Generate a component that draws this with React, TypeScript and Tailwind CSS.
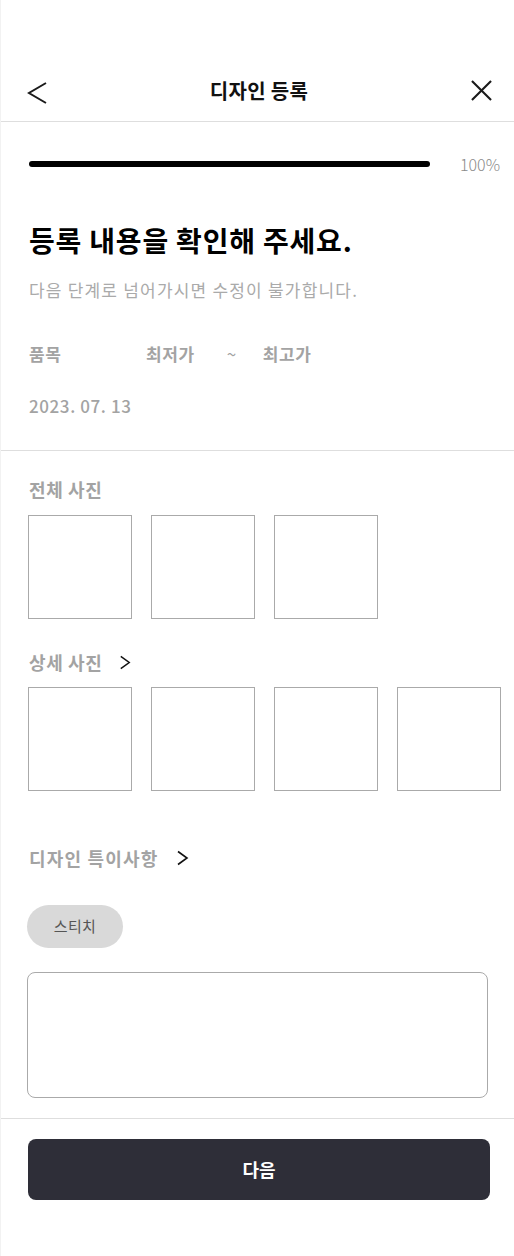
import React from 'react';

const font = { fontFamily: '"Noto Sans CJK KR", "Noto Sans", sans-serif' };

const PhotoBox: React.FC = () => (
  <div className="w-[104px] h-[104px] border border-[#aaaaaa] bg-white shrink-0"></div>
);

const Chevron: React.FC<{ className?: string }> = ({ className }) => (
  <svg viewBox="0 0 12 16" className={className} fill="none" stroke="#111" strokeWidth="1.6">
    <path d="M1.5 1.5 L10.5 8 L1.5 14.5" />
  </svg>
);

export default function App() {
  return (
    <div className="min-h-[1256px] bg-white border-l border-[#f2f2f2] pt-[61px]" style={font}>
      {/* Header */}
      <div className="h-[61px] border-b border-[#dedede] flex items-center justify-between pl-[26px] pr-[22px]">
        <svg viewBox="0 0 20 22" className="w-[20px] h-[22px] mt-[4px]" fill="none" stroke="#1a1a1a" strokeWidth="2">
          <path d="M19 1 L2 11 L19 21" />
        </svg>
        <h1 className="text-[20px] font-bold text-[#111] leading-none tracking-[0.3px]">디자인 등록</h1>
        <svg viewBox="0 0 22 22" className="w-[21px] h-[21px] mb-[2px]" fill="none" stroke="#1a1a1a" strokeWidth="2.2">
          <path d="M1 1 L21 21 M21 1 L1 21" />
        </svg>
      </div>

      {/* Progress */}
      <div className="flex items-center pl-[28px] pr-[14px] mt-[34px] gap-[30px]">
        <div className="flex-1 h-[6px] rounded-full bg-black"></div>
        <span className="text-[16px] font-light text-[#8a8a8a] leading-none">100%</span>
      </div>

      <div className="px-[28px]">
        <h2 className="mt-[50px] text-[28px] font-bold text-black leading-[36px] tracking-[0.8px]">등록 내용을 확인해 주세요.</h2>
        <p className="mt-[20px] text-[17px] text-[#aaaaaa] leading-[24px] tracking-[1.2px]">다음 단계로 넘어가시면 수정이 불가합니다.</p>
        <div className="mt-[40px] flex items-center text-[17px] font-bold text-[#a3a3a3] leading-[24px] tracking-[0.6px]">
          <span className="w-[117px]">품목</span>
          <span>최저가</span>
          <span className="ml-[32px] font-normal">~</span>
          <span className="ml-[26px]">최고가</span>
        </div>
        <p className="mt-[28px] text-[17px] font-medium text-[#a3a3a3] leading-[24px] tracking-[0.6px]">2023. 07. 13</p>
      </div>

      <div className="mt-[32px] border-t border-[#dedede]"></div>

      <div className="pl-[27px] pr-[12px]">
        <h3 className="mt-[26px] pl-[1px] text-[18px] font-bold text-[#a3a3a3] leading-[24px] tracking-[0.6px]">전체 사진</h3>
        <div className="mt-[14px] flex gap-[19px]">
          <PhotoBox />
          <PhotoBox />
          <PhotoBox />
        </div>

        <div className="mt-[31px] pl-[1px] flex items-center gap-[17px]">
          <h3 className="text-[18px] font-bold text-[#a3a3a3] leading-[24px] tracking-[0.6px]">상세 사진</h3>
          <Chevron className="w-[12px] h-[15px]" />
        </div>
        <div className="mt-[13px] flex gap-[19px]">
          <PhotoBox />
          <PhotoBox />
          <PhotoBox />
          <PhotoBox />
        </div>

        <div className="mt-[55px] pl-[1px] flex items-center gap-[17px]">
          <h3 className="text-[18px] font-bold text-[#a3a3a3] leading-[24px] tracking-[1.2px]">디자인 특이사항</h3>
          <Chevron className="w-[13px] h-[16px]" />
        </div>
      </div>

      <div className="px-[26px]">
        <div className="mt-[35px] w-[96px] h-[43px] rounded-full bg-[#d9d9d9] flex items-center justify-center text-[15px] text-[#555555] tracking-[0.3px]">
          스티치
        </div>
        <div className="mt-[24px] h-[126px] rounded-[8px] border border-[#aaaaaa]"></div>
      </div>

      <div className="mt-[20px] border-t border-[#dedede]"></div>

      <div className="pl-[27px] pr-[24px]">
        <button className="mt-[20px] w-full h-[61px] rounded-[8px] bg-[#2e2e38] text-white text-[18px] font-bold">
          다음
        </button>
      </div>
    </div>
  );
}
